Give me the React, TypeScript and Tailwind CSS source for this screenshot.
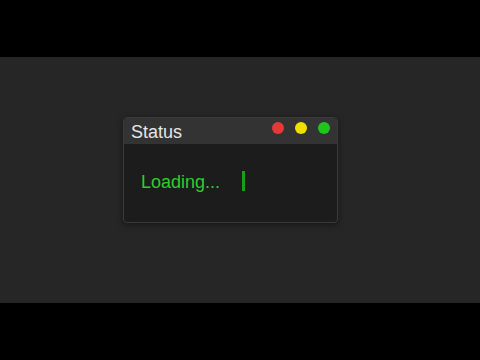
export default function App() {
  return (
    <div className="flex h-[360px] w-[480px] flex-col bg-black font-['Liberation_Sans',Arial,sans-serif]">
      <div className="mt-[57px] h-[246px] bg-[#262626] pl-[123px] pt-[60px]">
        <div className="w-[215px] overflow-hidden rounded-[4px] border border-[#3a3a3a] bg-[#1c1c1c] shadow-[0_2px_6px_rgba(0,0,0,0.4)]">
          <div className="flex h-[26px] items-start justify-between bg-[#333333] pl-[7px] pr-[7px]">
            <span className="pt-[4px] text-[18px] leading-[20px] text-[#e6e6e6]">Status</span>
            <div className="flex gap-[11px] pt-[4px]">
              <span className="h-[12px] w-[12px] rounded-full bg-[#e53935]" />
              <span className="h-[12px] w-[12px] rounded-full bg-[#f0e000]" />
              <span className="h-[12px] w-[12px] rounded-full bg-[#1fc41f]" />
            </div>
          </div>
          <div className="flex h-[78px] items-start pl-[17px] pt-[28px]">
            <span className="text-[18px] leading-[20px] text-[#2ecc2e]">Loading...</span>
            <span className="ml-[22px] mt-[-1px] h-[20px] w-[3px] bg-[#1a9e1a]" />
          </div>
        </div>
      </div>
    </div>
  );
}
